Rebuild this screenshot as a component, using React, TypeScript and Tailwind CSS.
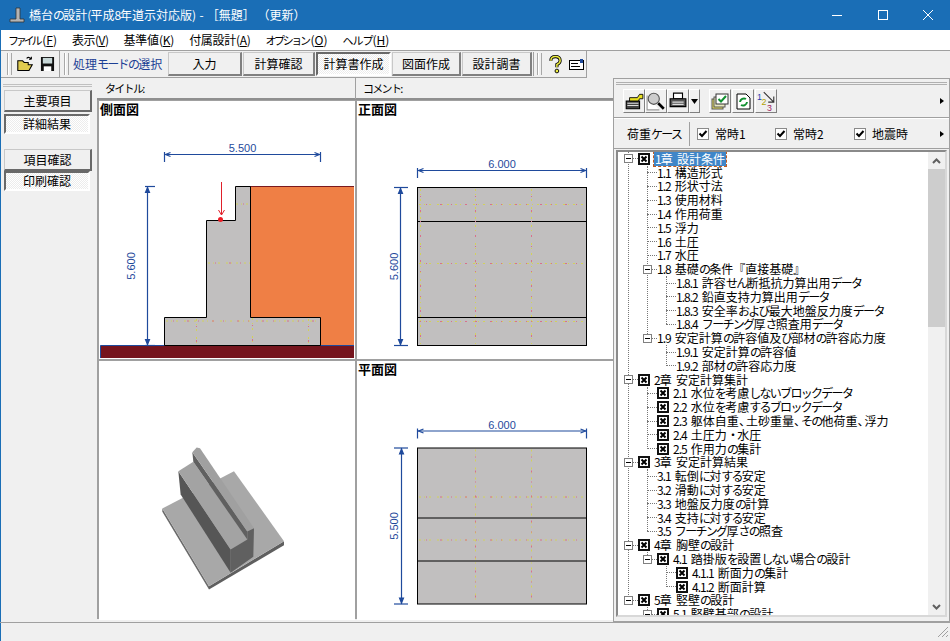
import React from 'react';

const BLUE = '#1f4a9c';

interface TreeNode {
  label: string;
  check?: boolean;
  selected?: boolean;
  children?: TreeNode[];
}

const tree: TreeNode[] = [
  {
    label: '1章 設計条件',
    check: true,
    selected: true,
    children: [
      { label: '1.1 構造形式' },
      { label: '1.2 形状寸法' },
      { label: '1.3 使用材料' },
      { label: '1.4 作用荷重' },
      { label: '1.5 浮力' },
      { label: '1.6 土圧' },
      { label: '1.7 水圧' },
      {
        label: '1.8 基礎の条件『直接基礎』',
        children: [
          { label: '1.8.1 許容せん断抵抗力算出用データ' },
          { label: '1.8.2 鉛直支持力算出用データ' },
          { label: '1.8.3 安全率および最大地盤反力度データ' },
          { label: '1.8.4 フーチング厚さ照査用データ' },
        ],
      },
      {
        label: '1.9 安定計算の許容値及び部材の許容応力度',
        children: [{ label: '1.9.1 安定計算の許容値' }, { label: '1.9.2 部材の許容応力度' }],
      },
    ],
  },
  {
    label: '2章 安定計算集計',
    check: true,
    children: [
      { label: '2.1 水位を考慮しないブロックデータ', check: true },
      { label: '2.2 水位を考慮するブロックデータ', check: true },
      { label: '2.3 躯体自重、土砂重量、その他荷重、浮力', check: true },
      { label: '2.4 土圧力・水圧', check: true },
      { label: '2.5 作用力の集計', check: true },
    ],
  },
  {
    label: '3章 安定計算結果',
    check: true,
    children: [
      { label: '3.1 転倒に対する安定' },
      { label: '3.2 滑動に対する安定' },
      { label: '3.3 地盤反力度の計算' },
      { label: '3.4 支持に対する安定' },
      { label: '3.5 フーチング厚さの照査' },
    ],
  },
  {
    label: '4章 胸壁の設計',
    check: true,
    children: [
      {
        label: '4.1 踏掛版を設置しない場合の設計',
        check: true,
        children: [
          { label: '4.1.1 断面力の集計', check: true },
          { label: '4.1.2 断面計算', check: true },
        ],
      },
    ],
  },
  {
    label: '5章 竪壁の設計',
    check: true,
    children: [{ label: '5.1 竪壁基部の設計', check: true, children: [] }],
  },
];

const ROW = 13.8;
const indents = ['pl-[0px]', 'pl-[19px]', 'pl-[38px]'];
const guides = ['left-[10px]', 'left-[29px]', 'left-[48px]'];
const DITHER = 'bg-[repeating-conic-gradient(#ffffff_0_25%,#ececec_0_50%)] bg-[length:2px_2px]';

const countRows = (n: TreeNode): number =>
  1 + (n.children ?? []).reduce((sum, c) => sum + countRows(c), 0);

const guideHeight = (nodes: TreeNode[]) => {
  const before = nodes.slice(0, -1).reduce((sum, c) => sum + countRows(c), 0);
  return before * ROW + ROW / 2;
};

// the old UI font is proportional: kana, 、 and ascii run narrower than kanji
const Prop: React.FC<{ text: string }> = ({ text }) => (
  <>
    {text
      .split(/(、|[\u3040-\u30ff]+| +|[\x21-\x7e]+)/)
      .filter(Boolean)
      .map((run, i) => {
        let cls = '';
        if (run === '、') cls = 'tracking-[-5px]';
        else if (run[0] === ' ') cls = 'tracking-[1.5px]';
        else if (/^[\u3040-\u30ff]/.test(run)) cls = 'tracking-[-1.7px]';
        else if (/^[\x21-\x7e]/.test(run)) cls = 'tracking-[-1px]';
        return (
          <span key={i} className={cls}>
            {run}
          </span>
        );
      })}
  </>
);

const CheckX = () => (
  <svg width="12" height="12" viewBox="0 0 12 12" className="shrink-0">
    <rect x="0.5" y="0.5" width="11" height="11" fill="#e8e8e8" stroke="#111" />
    <rect x="1.5" y="1.5" width="9" height="9" fill="#fff" stroke="#111" />
    <path d="M3.5 3.5 L8.5 8.5 M8.5 3.5 L3.5 8.5" stroke="#000" strokeWidth="2" />
  </svg>
);

const Expander = () => (
  <span className="relative z-10 flex h-[9px] w-[9px] items-center justify-center border border-[#808080] bg-white">
    <span className="h-px w-[5px] bg-black" />
  </span>
);

const TreeRows: React.FC<{ nodes: TreeNode[]; level: number }> = ({ nodes, level }) => (
  <div className="relative">
    <div
      className={`absolute top-0 w-0 border-l border-dotted border-[#777] ${guides[level]}`}
      style={{ height: guideHeight(nodes) }}
    />
    {nodes.map((node) => (
      <div key={node.label}>
        <div className={`flex h-[13.8px] items-center ${indents[level]}`}>
          <span className="relative flex w-[20px] shrink-0 items-center justify-center">
            <span className="absolute left-[10px] w-[10px] border-t border-dotted border-[#777]" />
            {node.children && <Expander />}
          </span>
          {node.check && <CheckX />}
          <span
            className={`whitespace-nowrap leading-none ${node.check ? 'ml-[4px]' : ''} ${
              node.selected ? 'bg-[#3f86c8] px-px py-px text-white outline-1 outline-dashed outline-[#c25a1e]' : ''
            }`}
          >
            <Prop text={node.label} />
          </span>
        </div>
        {node.children && node.children.length > 0 && <TreeRows nodes={node.children} level={level + 1} />}
      </div>
    ))}
  </div>
);

const Handle = () => (
  <span className="mx-[3px] flex h-[22px] w-[5px] shrink-0 justify-between border-x border-[#a8a8a8] bg-[#f0f0f0]">
    <span className="h-full w-px bg-white" />
  </span>
);

const ModeButton: React.FC<{ label: string; width: string; active?: boolean }> = ({ label, width, active }) => (
  <div
    className={`flex h-[24px] items-center justify-center text-[12px] ${width} ${
      active
        ? `border-2 border-b-white border-l-[#696969] border-r-white border-t-[#696969] ${DITHER}`
        : 'border border-b-2 border-r-2 border-b-[#808080] border-l-[#c8c8c8] border-r-[#808080] border-t-[#c8c8c8] bg-[#f0f0f0]'
    }`}
  >
    {label}
  </div>
);

const SideButton: React.FC<{ label: string; pressed?: boolean }> = ({ label, pressed }) =>
  pressed ? (
    <div
      className={`flex h-[20px] w-[86px] items-center justify-center border-2 border-b-white border-l-[#696969] border-r-white border-t-[#696969] text-[12px] ${DITHER}`}
    >
      {label}
    </div>
  ) : (
    <div className="flex h-[22px] w-[88px] items-center justify-center border border-b-2 border-r-2 border-b-[#696969] border-l-[#c8c8c8] border-r-[#696969] border-t-[#c8c8c8] text-[12px]">
      {label}
    </div>
  );

const Check: React.FC<{ label: string; width: string }> = ({ label, width }) => (
  <div className={`flex items-center gap-[6px] ${width}`}>
    <svg width="12" height="12" viewBox="0 0 12 12">
      <rect x="0.5" y="0.5" width="11" height="11" fill="#fff" stroke="#8a8a8a" />
      <path d="M2.5 5.5 L5 8 L9.5 3" fill="none" stroke="#000" strokeWidth="2" />
    </svg>
    <span className="text-[12px] leading-none">{label}</span>
  </div>
);

const IconButton: React.FC<{ children: React.ReactNode; narrow?: boolean; gap?: boolean }> = ({
  children,
  narrow,
  gap,
}) => (
  <div
    className={`flex h-[24px] items-center justify-center border border-b-[#808080] border-l-white border-r-[#808080] border-t-white ${
      narrow ? 'w-[11px]' : 'w-[22px]'
    } ${gap ? 'ml-px' : ''}`}
  >
    {children}
  </div>
);

const DotLine: React.FC<{ x1: number; y1: number; x2: number; y2: number }> = (p) => (
  <g strokeWidth="1" fill="none">
    <line {...p} stroke="#d2d25a" strokeDasharray="2 3 1 4 2 6" />
    <line {...p} stroke="#d8708c" strokeDasharray="2 9 1 13" strokeDashoffset="4" />
  </g>
);

const DimH: React.FC<{ x1: number; x2: number; y: number; label: string; ty: number; t1: number; t2: number }> = ({
  x1,
  x2,
  y,
  label,
  ty,
  t1,
  t2,
}) => (
  <g stroke={BLUE} fill="none" strokeWidth="1.2">
    <line x1={x1} y1={y} x2={x2} y2={y} />
    <line x1={x1} y1={t1} x2={x1} y2={t2} />
    <line x1={x2} y1={t1} x2={x2} y2={t2} />
    <path d={`M${x1 + 6} ${y - 2} L${x1 + 1} ${y} L${x1 + 6} ${y + 2} M${x2 - 6} ${y - 2} L${x2 - 1} ${y} L${x2 - 6} ${y + 2}`} />
    <text
      x={(x1 + x2) / 2}
      y={ty}
      textAnchor="middle"
      fill={BLUE}
      stroke="none"
      fontSize="11"
      fontFamily="'Liberation Sans', sans-serif"
    >
      {label}
    </text>
  </g>
);

const DimV: React.FC<{ x: number; y1: number; y2: number; label: string; tx: number; t1: number; t2: number }> = ({
  x,
  y1,
  y2,
  label,
  tx,
  t1,
  t2,
}) => (
  <g stroke={BLUE} fill="none" strokeWidth="1.2">
    <line x1={x} y1={y1} x2={x} y2={y2} />
    <line x1={t1} y1={y1} x2={t2} y2={y1} />
    <line x1={t1} y1={y2} x2={t2} y2={y2} />
    <path d={`M${x - 2} ${y1 + 6} L${x} ${y1 + 1} L${x + 2} ${y1 + 6} Z M${x - 2} ${y2 - 6} L${x} ${y2 - 1} L${x + 2} ${y2 - 6} Z`} fill={BLUE} />
    <text
      transform={`translate(${tx} ${(y1 + y2) / 2}) rotate(-90)`}
      textAnchor="middle"
      fill={BLUE}
      stroke="none"
      fontSize="11"
      fontFamily="'Liberation Sans', sans-serif"
    >
      {label}
    </text>
  </g>
);

const SideView = () => (
  <svg viewBox="99 101 256 258" className="block h-full w-full">
    <rect x="250.5" y="186.5" width="103.5" height="159" fill="#ef7f45" />
    <line x1="250" y1="186.5" x2="354" y2="186.5" stroke="#7a1a1e" />
    <rect x="100.5" y="345.5" width="253.5" height="12.5" fill="#75141d" />
    <path d="M100.5 358 V345.5 H354" fill="none" stroke="#1f4a9c" />
    <path
      d="M164.5 345.5 V317.5 H206.5 V220.5 H235.5 V186.5 H250.5 V317.5 H320.5 V345.5 Z"
      fill="#c1bfbf"
      stroke="#000"
      strokeWidth="1"
    />
    <DotLine x1={236} y1={204} x2={250} y2={204} />
    <DotLine x1={208} y1={263} x2={250} y2={263} />
    <DotLine x1={166} y1={321} x2={320} y2={321} />
    <DotLine x1={196.5} y1={319} x2={196.5} y2={344} />
    <DotLine x1={252.5} y1={318} x2={252.5} y2={344} />
    <DotLine x1={308.5} y1={319} x2={308.5} y2={344} />
    <line x1="221.5" y1="182" x2="221.5" y2="215" stroke="#e0202a" />
    <path d="M218.5 210 L221.5 215 L224.5 210" fill="none" stroke="#e0202a" />
    <circle cx="220.5" cy="219.5" r="2.5" fill="#ee1c25" />
    <DimH x1={164.5} x2={320.5} y={154.5} label="5.500" ty={152} t1={152} t2={162} />
    <DimV x={147.5} y1={186.5} y2={345.5} label="5.600" tx={135} t1={145} t2={155} />
  </svg>
);

const FrontView = () => (
  <svg viewBox="357 101 256 258" className="block h-full w-full">
    <rect x="417.5" y="187.5" width="169" height="158" fill="#c1bfbf" stroke="#000" />
    <line x1="417.5" y1="221.5" x2="586.5" y2="221.5" stroke="#000" />
    <line x1="417.5" y1="317.5" x2="586.5" y2="317.5" stroke="#000" />
    <DotLine x1={419} y1={204.5} x2={585} y2={204.5} />
    <DotLine x1={419} y1={263.5} x2={585} y2={263.5} />
    <DotLine x1={419} y1={321.5} x2={585} y2={321.5} />
    <DotLine x1={420.5} y1={189} x2={420.5} y2={344} />
    <DotLine x1={475.5} y1={189} x2={475.5} y2={344} />
    <DotLine x1={531.5} y1={189} x2={531.5} y2={344} />
    <DimH x1={417.5} x2={586.5} y={170.5} label="6.000" ty={168} t1={168} t2={178} />
    <DimV x={400.5} y1={187.5} y2={345.5} label="5.600" tx={398} t1={394} t2={408} />
  </svg>
);

const PlanView = () => (
  <svg viewBox="357 362 256 258" className="block h-full w-full">
    <rect x="417.5" y="448.5" width="169" height="156" fill="#c1bfbf" stroke="#000" />
    <line x1="417.5" y1="518.5" x2="586.5" y2="518.5" stroke="#000" />
    <line x1="417.5" y1="561.5" x2="586.5" y2="561.5" stroke="#000" />
    <DotLine x1={419} y1={497.5} x2={585} y2={497.5} />
    <DotLine x1={419} y1={540.5} x2={585} y2={540.5} />
    <DotLine x1={475.5} y1={450} x2={475.5} y2={603} />
    <DotLine x1={531.5} y1={450} x2={531.5} y2={603} />
    <DimH x1={417.5} x2={586.5} y={431.5} label="6.000" ty={429} t1={429} t2={439} />
    <DimV x={401.5} y1={448.5} y2={604.5} label="5.500" tx={398} t1={394} t2={408} />
  </svg>
);

// polygon points are in 3x crop coordinates, scaled down by the group transform
const IsoView = () => (
  <svg viewBox="99 362 256 258" className="block h-full w-full">
    <g transform="translate(130 430) scale(0.3333)">
      <polygon points="97,237 237,470 237,480 97,247" fill="#6a6a6a" />
      <polygon points="237,470 462,335 462,347 237,480" fill="#5f5f5f" />
      <polygon points="97,237 312,125 462,335 237,470" fill="#a8a8a8" />
      <polygon points="145,125 302,360 302,430 152,195" fill="#565656" />
      <polygon points="145,125 190,97 352,330 302,360" fill="#a3a3a3" />
      <polygon points="187,68 352,306 352,330 190,97" fill="#606060" />
      <polygon points="187,68 200,54 210,56 372,296 352,306" fill="#a0a0a0" />
      <polygon points="302,360 352,330 352,306 372,296 370,382 302,430" fill="#606060" />
    </g>
  </svg>
);

const PaneLabel: React.FC<{ text: string }> = ({ text }) => (
  <span className="absolute left-[1px] top-0 text-[13px] font-bold leading-[15px] text-black">{text}</span>
);

export default function App() {
  return (
    <div className="relative flex h-[641px] w-[950px] flex-col overflow-hidden bg-[#f0f0f0] font-['Noto_Sans_CJK_JP',sans-serif] text-black">
      <span className="absolute inset-y-0 left-0 w-px bg-[#1a6eb6]" />

      {/* Title bar */}
      <div className="flex h-[30px] shrink-0 items-center bg-[#1a6eb6] text-white">
        <svg width="16" height="16" viewBox="0 0 16 16" className="ml-[9px] mr-[4px]">
          <path d="M1 15 V12 H7 V1 H11 V12 H15 V15 Z" fill="#b4b4b4" stroke="#333" strokeWidth="0.8" />
        </svg>
        <span className="whitespace-pre text-[12px]">
          <Prop text="橋台の設計(平成8年道示対応版) - " />［無題］ （更新）
        </span>
        <div className="ml-auto flex h-full text-white">
          <div className="flex w-[46px] items-center justify-center">
            <span className="h-px w-[10px] bg-white" />
          </div>
          <div className="flex w-[46px] items-center justify-center">
            <span className="h-[10px] w-[10px] border border-white" />
          </div>
          <div className="flex w-[44px] items-center justify-center">
            <svg width="10" height="10" viewBox="0 0 10 10">
              <path d="M0 0 L10 10 M10 0 L0 10" stroke="#fff" />
            </svg>
          </div>
        </div>
      </div>

      {/* Menu */}
      <div className="flex h-[20px] shrink-0 items-center gap-[15px] whitespace-nowrap bg-white pl-[8px] text-[12px] leading-none">
        <span>
          <span className="text-[11px] tracking-[-3.2px]">ファイル</span>
          <span className="ml-[3px]">(<u>F</u>)</span>
        </span>
        <span className="tracking-[-0.5px]">表示(<u>V</u>)</span>
        <span className="tracking-[-0.2px]">基準値(<u>K</u>)</span>
        <span className="tracking-[-0.3px]">付属設計(<u>A</u>)</span>
        <span>
          <span className="text-[11px] tracking-[-2.4px]">オプション</span>
          <span className="ml-[2px]">(<u>O</u>)</span>
        </span>
        <span>
          <span className="text-[11px] tracking-[-1px]">ヘルプ</span>
          <span>(<u>H</u>)</span>
        </span>
      </div>

      {/* Toolbar */}
      <div className="flex h-[28px] shrink-0 items-stretch border-t border-[#a0a0a0]">
        <div className="flex w-[60px] items-center border-b border-r border-[#a0a0a0] pl-[4px]">
          <Handle />
          <svg width="16" height="16" viewBox="0 0 20 20" className="ml-[2px]">
            <path d="M1 18 V6 H7 L9 8 H14 V11 H19 L15 18 Z" fill="#e0cc50" stroke="#000" strokeWidth="1.3" />
            <path d="M12 3 Q15 0 18 4 M18 4 L18 1 M18 4 L15 4" fill="none" stroke="#000" strokeWidth="1.3" />
          </svg>
          <svg width="15" height="16" viewBox="0 0 16 17" className="ml-[7px]">
            <path d="M1 1 H15 V16 H1 Z" fill="#111" />
            <rect x="3" y="2" width="10" height="6" fill="#c8d8d8" />
            <rect x="4" y="11" width="8" height="5" fill="#fff" />
          </svg>
        </div>
        <div className="flex w-[527px] items-center border-b border-r border-[#a0a0a0] pl-[1px]">
          <Handle />
          <span className="ml-[1px] w-[95px] whitespace-nowrap text-[12px] leading-none text-[#1c3f94]">
            <Prop text="処理モードの選択" />
          </span>
          <ModeButton label="入力" width="w-[74px]" />
          <ModeButton label="計算確認" width="w-[72px] ml-px" />
          <ModeButton label="計算書作成" width="w-[75px] ml-px" active />
          <ModeButton label="図面作成" width="w-[69px] ml-px" />
          <ModeButton label="設計調書" width="w-[70px] ml-px" />
          <span className="ml-[1px] h-[24px] w-px bg-[#a0a0a0]" />
          <Handle />
          <svg width="13" height="19" viewBox="0 0 14 20" className="ml-[4px]">
            <path d="M2 6 Q2 1.5 7 1.5 Q12 1.5 12 6 Q12 8.5 8.5 10 V13" fill="none" stroke="#000" strokeWidth="3.4" />
            <path d="M2 6 Q2 1.5 7 1.5 Q12 1.5 12 6 Q12 8.5 8.5 10 V13" fill="none" stroke="#ecec40" strokeWidth="1.6" />
            <circle cx="8.5" cy="17" r="2" fill="#ecec40" stroke="#000" />
          </svg>
          <svg width="15" height="11" viewBox="0 0 15 11" className="ml-[7px]">
            <rect x="0.5" y="1.5" width="14" height="9" fill="#fff" stroke="#000" />
            <path d="M2 4.5 H9 M2 7.5 H11" stroke="#000" />
            <rect x="11" y="0" width="3" height="4" fill="#1f4a9c" />
          </svg>
        </div>
      </div>

      {/* Body */}
      <div className="flex min-h-0 flex-1">
        {/* Left column */}
        <div className="flex w-[97px] shrink-0 flex-col items-start pl-[4px]">
          <div className="mb-[3px] ml-[-1px] mt-[6px] h-[3px] w-[89px] border-y border-[#c0c0c0]" />
          <SideButton label="主要項目" />
          <div className="mt-[2px]">
            <SideButton label="詳細結果" pressed />
          </div>
          <div className="mt-[15px]">
            <SideButton label="項目確認" />
          </div>
          <SideButton label="印刷確認" pressed />
        </div>

        {/* Center column */}
        <div className="flex w-[516px] shrink-0 flex-col">
          <div className="flex h-[22px] shrink-0 items-center border-b-2 border-[#8f8f8f] text-[11px] leading-none">
            <span className="w-[259px] border-r border-[#a0a0a0] py-[5px] pl-[8px]">
              <Prop text="タイトル:" />
            </span>
            <span className="pl-[7px]">
              <Prop text="コメント:" />
            </span>
          </div>
          <div className="grid h-[519px] grid-cols-[256px_256px] grid-rows-[258px_259px] gap-[2px] bg-[#a0a0a0] pl-[2px] pt-px">
            <div className="relative bg-white">
              <PaneLabel text="側面図" />
              <SideView />
            </div>
            <div className="relative bg-white">
              <PaneLabel text="正面図" />
              <FrontView />
            </div>
            <div className="relative bg-white">
              <IsoView />
            </div>
            <div className="relative bg-white">
              <PaneLabel text="平面図" />
              <PlanView />
            </div>
          </div>
        </div>

        {/* Right column */}
        <div className="flex w-[337px] flex-col border border-[#a0a0a0]">
          <div className="mx-[2px] mt-[3px] h-[3px] shrink-0 border-y border-[#b0b0b0]" />
          <div className="flex h-[33px] shrink-0 items-center border-b border-[#a0a0a0] pl-[9px]">
            <IconButton>
              <svg width="20" height="20" viewBox="0 0 18 18">
                <path d="M2 9 H14 V16 H2 Z" fill="#444" stroke="#000" />
                <path d="M3 11 H13 M3 13 H13" stroke="#ddd" />
                <path d="M5 6 H12 L14 3 H17 V7 H14 L13 9 H5 Z" fill="#e8e020" stroke="#000" strokeWidth="0.8" />
              </svg>
            </IconButton>
            <IconButton>
              <svg width="20" height="20" viewBox="0 0 18 18">
                <path d="M1 4 V17 H12" fill="#fff" stroke="#999" />
                <circle cx="7" cy="7" r="5" fill="#ccc" stroke="#555" />
                <path d="M11 11 L16 16" stroke="#000" strokeWidth="2.4" />
              </svg>
            </IconButton>
            <IconButton>
              <svg width="18" height="18" viewBox="0 0 16 16">
                <path d="M4 1 H12 V6 H4 Z" fill="#fff" stroke="#000" />
                <path d="M1 6 H15 V13 H1 Z" fill="#555" stroke="#000" />
                <path d="M3 9 H13 M3 11 H13" stroke="#ddd" />
              </svg>
            </IconButton>
            <IconButton narrow>
              <svg width="7" height="5" viewBox="0 0 7 5">
                <path d="M0 0 H7 L3.5 5 Z" fill="#000" />
              </svg>
            </IconButton>
            <span className="w-[9px]" />
            <IconButton>
              <svg width="18" height="17" viewBox="0 0 18 17">
                <rect x="1" y="6" width="11" height="10" fill="#e8e060" stroke="#555" />
                <rect x="3" y="4" width="11" height="10" fill="#e8e8c0" stroke="#555" />
                <rect x="5" y="1" width="12" height="10" fill="#fff" stroke="#333" />
                <path d="M7.5 6 L10 8.5 L15 3" fill="none" stroke="#109030" strokeWidth="2" />
              </svg>
            </IconButton>
            <IconButton gap>
              <svg width="15" height="17" viewBox="0 0 15 17">
                <path d="M1 1 H10 L14 5 V16 H1 Z" fill="#fff" stroke="#000" />
                <path d="M4 9 A4 4 0 0 1 10 6 M11 9 A4 4 0 0 1 5 12" fill="none" stroke="#109030" strokeWidth="2" />
              </svg>
            </IconButton>
            <IconButton gap>
              <svg width="20" height="20" viewBox="0 0 18 18">
                <text x="1" y="8" fontSize="8" fill="#1f3fb0" fontFamily="'Liberation Sans', sans-serif">1</text>
                <text x="5" y="13" fontSize="8" fill="#b0a000" fontFamily="'Liberation Sans', sans-serif">2</text>
                <text x="10" y="18" fontSize="8" fill="#a02060" fontFamily="'Liberation Sans', sans-serif">3</text>
                <path d="M7 1 L16 10 M16 5 V10 H11" fill="none" stroke="#333" />
              </svg>
            </IconButton>
            <span className="ml-auto mr-[5px] h-0 w-0 border-y-[3px] border-l-[4px] border-y-transparent border-l-black" />
          </div>
          <div className="flex h-[31px] shrink-0 items-center border-y border-b-[#a0a0a0] border-t-white pl-[13px]">
            <span className="w-[62px] whitespace-nowrap text-[12px] leading-none">
              <Prop text="荷重ケース" />
            </span>
            <span className="mr-[7px] h-[24px] w-px bg-[#a0a0a0]" />
            <Check label="常時1" width="w-[78px]" />
            <Check label="常時2" width="w-[79px]" />
            <Check label="地震時" width="w-[70px]" />
            <span className="ml-auto mr-[5px] h-0 w-0 border-y-[3px] border-l-[4px] border-y-transparent border-l-black" />
          </div>
          <div className="mx-[2px] mb-[4px] mt-px flex min-h-0 flex-1 border-2 border-b-[#d8d8d8] border-l-[#8a8a8a] border-r-[#d8d8d8] border-t-[#8a8a8a] bg-white">
            <div className="min-w-0 flex-1 overflow-hidden text-[12px]">
              <TreeRows nodes={tree} level={0} />
            </div>
            <div className="flex w-[17px] shrink-0 flex-col bg-[#f0f0f0]">
              <div className="flex h-[17px] items-center justify-center">
                <svg width="9" height="6" viewBox="0 0 9 6">
                  <path d="M1 5 L4.5 1.5 L8 5" fill="none" stroke="#606060" strokeWidth="2" />
                </svg>
              </div>
              <div className="h-[158px] bg-[#cdcdcd]" />
              <div className="mt-auto flex h-[17px] items-center justify-center">
                <svg width="9" height="6" viewBox="0 0 9 6">
                  <path d="M1 1 L4.5 4.5 L8 1" fill="none" stroke="#606060" strokeWidth="2" />
                </svg>
              </div>
            </div>
          </div>
        </div>
      </div>

      {/* Status bar */}
      <div className="relative h-[19px] shrink-0 border-t border-[#a0a0a0]">
        <svg width="12" height="12" viewBox="0 0 12 12" className="absolute bottom-[3px] right-[1px]">
          <path d="M11 1 L1 11 M11 5 L5 11 M11 9 L9 11" stroke="#a0a0a0" />
        </svg>
      </div>
    </div>
  );
}
